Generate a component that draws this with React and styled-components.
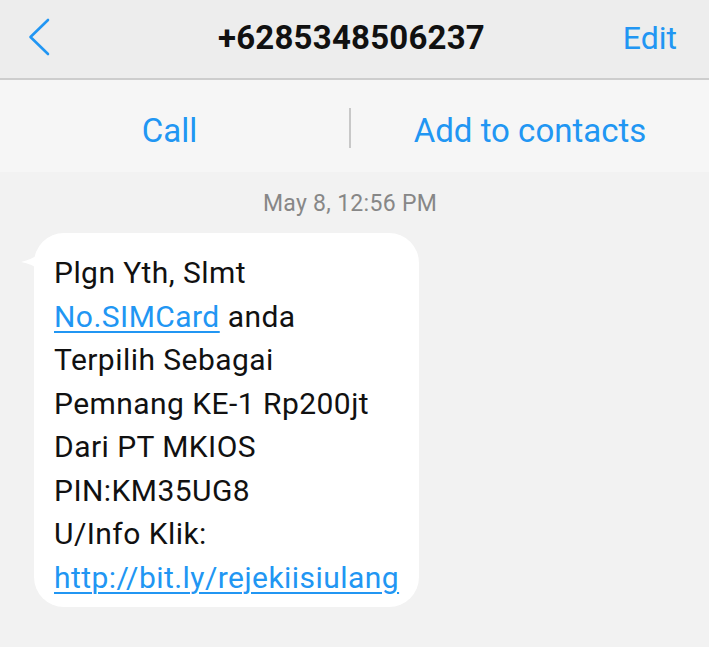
import React from "react";
import styled, { createGlobalStyle } from "styled-components";

const GlobalStyle = createGlobalStyle`
  html, body {
    margin: 0;
    padding: 0;
    background: #f2f2f2;
    font-family: Roboto, "Liberation Sans", sans-serif;
  }
`;

const Screen = styled.div`
  width: 709px;
  min-height: 647px;
  background: #f2f2f2;
`;

const Header = styled.header`
  display: grid;
  grid-template-columns: 1fr auto 1fr;
  align-items: center;
  height: 80px;
  padding-bottom: 3px;
  background: #ededed;
  border-bottom: 2px solid #cdcdcd;
  box-sizing: border-box;
`;

const BackButton = styled.button`
  justify-self: start;
  display: flex;
  align-items: center;
  border: 0;
  background: none;
  padding: 0 0 0 27px;
  height: 40px;
  cursor: pointer;
`;

const Title = styled.h1`
  margin: 0;
  font-size: 33px;
  font-weight: 700;
  color: #111;
  letter-spacing: 0.2px;
  padding-right: 6px;
`;

const HeaderLink = styled.span`
  justify-self: end;
  padding-right: 32px;
  font-size: 32px;
  color: #2196f3;
`;

const ActionBar = styled.nav`
  display: grid;
  grid-template-columns: 349px 2px 1fr;
  align-items: center;
  height: 92px;
  padding-top: 9px;
  box-sizing: border-box;
  background: #f6f6f6;
`;

const Action = styled.span`
  text-align: center;
  font-size: 33px;
  color: #2196f3;
  padding-right: ${(p) => p.$trim || 0}px;
`;

const Divider = styled.span`
  align-self: start;
  margin-top: 19px;
  width: 2px;
  height: 40px;
  background: #c8c8c8;
`;

const Thread = styled.main`
  display: flex;
  flex-direction: column;
  align-items: flex-start;
  padding: 17px 0 0 34px;
`;

const Timestamp = styled.div`
  align-self: stretch;
  margin-left: -34px;
  padding-right: 9px;
  text-align: center;
  font-size: 23px;
  color: #878787;
  letter-spacing: 0.3px;
  line-height: 30px;
`;

const Bubble = styled.div`
  position: relative;
  margin-top: 14px;
  width: 385px;
  box-sizing: border-box;
  padding: 18px 10px 8px 20px;
  background: #fff;
  border-radius: 30px;
  font-size: 30px;
  line-height: 43.5px;
  color: #111;
  letter-spacing: 0.45px;
`;

const Tail = styled.svg`
  position: absolute;
  left: -13px;
  top: 20px;
`;

const Line = styled.div`
  white-space: nowrap;
`;

const Link = styled.span`
  color: #2196f3;
  text-decoration: underline;
  text-decoration-thickness: 1.5px;
  text-underline-offset: 4px;
`;

export default function App() {
  return (
    <Screen>
      <GlobalStyle />
      <Header>
        <BackButton aria-label="Back">
          <svg width="24" height="40" viewBox="0 0 24 40">
            <path
              d="M21 2 L3.5 19 L21 36"
              fill="none"
              stroke="#2196f3"
              strokeWidth="2.6"
              strokeLinecap="round"
              strokeLinejoin="round"
            />
          </svg>
        </BackButton>
        <Title>+6285348506237</Title>
        <HeaderLink>Edit</HeaderLink>
      </Header>
      <ActionBar>
        <Action $trim={10}>Call</Action>
        <Divider />
        <Action>Add to contacts</Action>
      </ActionBar>
      <Thread>
        <Timestamp>May 8, 12:56 PM</Timestamp>
        <Bubble>
          <Tail width="20" height="22" viewBox="0 0 20 22">
            <path d="M20 0 L20 18 C14 13 7 10 0 9 C8 7 14 4 20 0 Z" fill="#fff" />
          </Tail>
          <Line>Plgn Yth, Slmt</Line>
          <Line>
            <Link>No.SIMCard</Link> anda
          </Line>
          <Line>Terpilih Sebagai</Line>
          <Line>Pemnang KE-1 Rp200jt</Line>
          <Line>Dari PT MKIOS</Line>
          <Line>PIN:KM35UG8</Line>
          <Line>U/Info Klik:</Line>
          <Line>
            <Link>http://bit.ly/rejekiisiulang</Link>
          </Line>
        </Bubble>
      </Thread>
    </Screen>
  );
}
